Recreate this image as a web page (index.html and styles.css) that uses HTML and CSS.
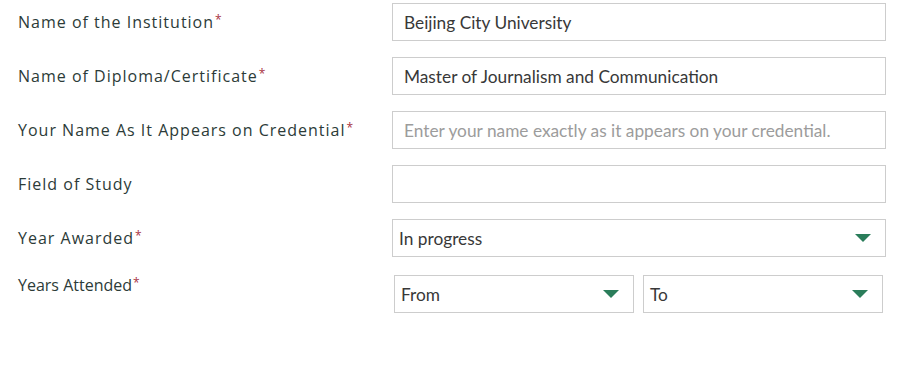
FILE: index.html
```html
<!DOCTYPE html>
<html>
<head>
<meta charset="utf-8">
<link rel="stylesheet" href="styles.css">
</head>
<body>
<form class="form">
  <div class="row">
    <label class="label">Name of the Institution<span class="req">*</span></label>
    <div class="field"><span class="value">Beijing City University</span></div>
  </div>
  <div class="row">
    <label class="label">Name of Diploma/Certificate<span class="req">*</span></label>
    <div class="field"><span class="value">Master of Journalism and Communication</span></div>
  </div>
  <div class="row">
    <label class="label">Your Name As It Appears on Credential<span class="req">*</span></label>
    <div class="field"><span class="placeholder">Enter your name exactly as it appears on your credential.</span></div>
  </div>
  <div class="row">
    <label class="label">Field of Study</label>
    <div class="field"></div>
  </div>
  <div class="row">
    <label class="label">Year Awarded<span class="req">*</span></label>
    <div class="field select"><span class="value">In progress</span><span class="caret"></span></div>
  </div>
  <div class="row row-top">
    <label class="label label-plain">Years Attended<span class="req">*</span></label>
    <div class="pair">
      <div class="field select"><span class="value">From</span><span class="caret"></span></div>
      <div class="field select"><span class="value">To</span><span class="caret"></span></div>
    </div>
  </div>
</form>
</body>
</html>
```
FILE: styles.css
```css
html, body {
  margin: 0;
  padding: 0;
  background: #ffffff;
}
.form {
  display: flex;
  flex-direction: column;
  gap: 16px;
  padding: 3px 16px 0 18px;
}
.row {
  display: grid;
  grid-template-columns: 374px 494px;
  align-items: center;
}
.label {
  font-family: "Open Sans", sans-serif;
  font-size: 16px;
  letter-spacing: 1px;
  color: #2c3b38;
  margin-top: -1px;
}
.label-plain {
  letter-spacing: 0;
  font-size: 16px;
}
.row-top {
  align-items: start;
}
.row-top .label {
  margin-top: 1px;
}
.req {
  color: #a8323f;
  font-size: 12px;
  vertical-align: 4px;
  margin-left: 1px;
  letter-spacing: 0;
}
.field {
  box-sizing: border-box;
  height: 38px;
  border: 1px solid #cdcdcd;
  background: #fff;
  display: flex;
  align-items: center;
  padding: 0 11px;
  font-family: "Lato", sans-serif;
  font-size: 17.3px;
  color: #383838;
}
.placeholder {
  color: #9c9c9c;
}
.select {
  justify-content: space-between;
  padding: 0 12px 0 6px;
}
.caret {
  width: 0;
  height: 0;
  border-left: 8px solid transparent;
  border-right: 8px solid transparent;
  border-top: 8px solid #2a7d5a;
  margin-right: 2px;
}
.pair {
  display: flex;
  gap: 9px;
  padding: 0 3px 0 2px;
  margin-top: 2px;
}
.pair .field {
  flex: 1;
}
```
